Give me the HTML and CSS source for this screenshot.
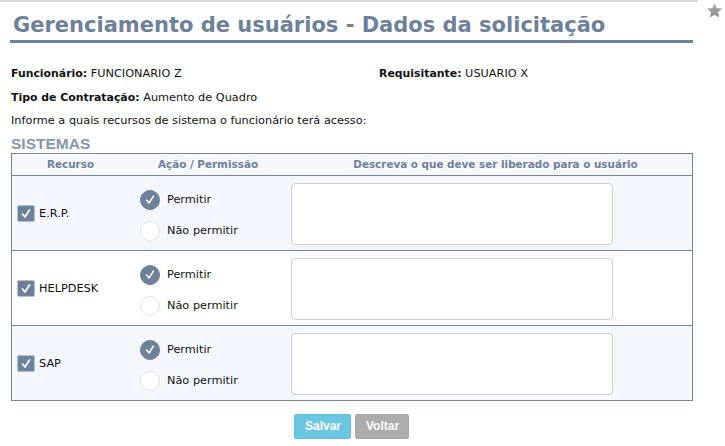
FILE: index.html
```html
<!DOCTYPE html>
<html lang="pt-BR">
<head>
<meta charset="utf-8">
<title>Gerenciamento de usuários</title>
<link rel="stylesheet" href="styles.css">
</head>
<body>
<div class="topline"></div>
<svg class="star" width="17" height="17" viewBox="0 0 24 24" aria-hidden="true"><defs><linearGradient id="sg" x1="0" y1="0" x2="0" y2="1"><stop offset="0" stop-color="#b4b4b4"/><stop offset="1" stop-color="#8c8c8c"/></linearGradient></defs><path d="M12 1.5l3.2 7.1 7.6.7-5.8 5.1 1.7 7.6L12 18l-6.7 4 1.7-7.6-5.8-5.1 7.6-.7z" fill="url(#sg)"/></svg>
<div class="page">
  <h1 class="title">Gerenciamento de usuários - Dados da solicitação</h1>
  <div class="info">
    <div class="info-row two">
      <div><b>Funcionário:</b> FUNCIONARIO Z</div>
      <div><b>Requisitante:</b> USUARIO X</div>
    </div>
    <div class="info-row"><b>Tipo de Contratação:</b> Aumento de Quadro</div>
    <div class="info-row">Informe a quais recursos de sistema o funcionário terá acesso:</div>
  </div>
  <div class="section">SISTEMAS</div>
  <table class="grid">
    <thead>
      <tr>
        <th class="c1">Recurso</th>
        <th class="c2">Ação / Permissão</th>
        <th class="c3">Descreva o que deve ser liberado para o usuário</th>
      </tr>
    </thead>
    <tbody>
      <tr class="alt">
        <td class="c1"><label class="chk"><span class="box"><svg width="12" height="11" viewBox="0 0 12 11"><path d="M2.5 6l2.5 3 4.5-7" fill="none" stroke="#fff" stroke-width="1.7" stroke-linecap="round" stroke-linejoin="round"/></svg></span>E.R.P.</label></td>
        <td class="c2">
          <div class="radio"><span class="dot on"><svg width="12" height="11" viewBox="0 0 12 11"><path d="M2.5 6l2.5 3 4.5-7" fill="none" stroke="#fff" stroke-width="1.4" stroke-linecap="round" stroke-linejoin="round"/></svg></span>Permitir</div>
          <div class="radio"><span class="dot"></span>Não permitir</div>
        </td>
        <td class="c3"><textarea class="desc"></textarea></td>
      </tr>
      <tr>
        <td class="c1"><label class="chk"><span class="box"><svg width="12" height="11" viewBox="0 0 12 11"><path d="M2.5 6l2.5 3 4.5-7" fill="none" stroke="#fff" stroke-width="1.7" stroke-linecap="round" stroke-linejoin="round"/></svg></span>HELPDESK</label></td>
        <td class="c2">
          <div class="radio"><span class="dot on"><svg width="12" height="11" viewBox="0 0 12 11"><path d="M2.5 6l2.5 3 4.5-7" fill="none" stroke="#fff" stroke-width="1.4" stroke-linecap="round" stroke-linejoin="round"/></svg></span>Permitir</div>
          <div class="radio"><span class="dot"></span>Não permitir</div>
        </td>
        <td class="c3"><textarea class="desc"></textarea></td>
      </tr>
      <tr class="alt">
        <td class="c1"><label class="chk"><span class="box"><svg width="12" height="11" viewBox="0 0 12 11"><path d="M2.5 6l2.5 3 4.5-7" fill="none" stroke="#fff" stroke-width="1.7" stroke-linecap="round" stroke-linejoin="round"/></svg></span>SAP</label></td>
        <td class="c2">
          <div class="radio"><span class="dot on"><svg width="12" height="11" viewBox="0 0 12 11"><path d="M2.5 6l2.5 3 4.5-7" fill="none" stroke="#fff" stroke-width="1.4" stroke-linecap="round" stroke-linejoin="round"/></svg></span>Permitir</div>
          <div class="radio"><span class="dot"></span>Não permitir</div>
        </td>
        <td class="c3"><textarea class="desc"></textarea></td>
      </tr>
    </tbody>
  </table>
  <div class="actions">
    <button class="btn save">Salvar</button>
    <button class="btn back">Voltar</button>
  </div>
</div>
</body>
</html>
```
FILE: styles.css
```css
html, body {
  margin: 0;
  padding: 0;
  background: #fff;
}
body {
  font-family: "DejaVu Sans", Verdana, sans-serif;
  font-size: 11.3px;
  color: #111;
  position: relative;
}
.topline {
  height: 2px;
  width: 698px;
  background: #d6d6d6;
}
.star {
  position: absolute;
  top: 2px;
  left: 706px;
}
.page {
  margin-left: 10px;
  width: 683px;
}
.title {
  margin: 8px 0 0 0;
  padding-left: 3px;
  height: 30px;
  line-height: 30px;
  font-size: 21px;
  font-weight: bold;
  color: #6d8198;
  border-bottom: 3px solid #6d8198;
  white-space: nowrap;
}
.info {
  margin: 19px 0 0 1px;
}
.info-row {
  height: 23.5px;
  line-height: 23.5px;
  white-space: nowrap;
}
.info-row b {
  font-size: 10.9px;
}
.info-row.two {
  display: grid;
  grid-template-columns: 368px 1fr;
}
.section {
  margin: 1px 0 0 1px;
  height: 19px;
  line-height: 19px;
  font-family: "Liberation Sans", Arial, sans-serif;
  font-weight: bold;
  font-size: 15.5px;
  color: #8596ab;
}
.grid {
  margin-left: 1px;
  width: 682px;
  border-collapse: collapse;
  border: 1px solid #73869c;
  table-layout: fixed;
}
.grid th {
  height: 21px;
  padding: 0;
  background: #f5f7fb;
  color: #6d8198;
  font-size: 10.4px;
  font-weight: bold;
  text-align: center;
  border-bottom: 1px solid #73869c;
}
.grid th.c1 { width: 117px; }
.grid th.c2 { width: 158px; }
.grid th.c3 { padding-left: 12px; }
.grid td {
  padding: 0;
  vertical-align: middle;
  border-top: 1px solid #73869c;
}
.grid tr.alt td {
  background: #f4f7fd;
}
.grid td.c1 {
  padding-left: 5px;
  padding-top: 1px;
}
.grid td.c2 {
  padding-left: 11px;
  padding-top: 5px;
}
.grid td.c3 {
  padding: 7px 4px 5px 4px;
}
.chk {
  display: flex;
  align-items: center;
  gap: 4px;
}
.box {
  width: 16px;
  height: 15px;
  background: #6d8198;
  border: 1px solid #b3bfcc;
  border-radius: 2px;
  display: flex;
  align-items: center;
  justify-content: center;
}
.radio {
  display: flex;
  align-items: center;
  gap: 7px;
  height: 31px;
}
.dot {
  width: 18px;
  height: 18px;
  border-radius: 50%;
  border: 1px solid #e2e2e2;
  background: #fff;
  display: flex;
  align-items: center;
  justify-content: center;
}
.dot.on {
  background: #6d8198;
  border-color: #6d8198;
}
.desc {
  display: block;
  box-sizing: border-box;
  width: 322px;
  height: 62px;
  margin: 0;
  border: 1px solid #cfcfcf;
  border-radius: 4px;
  background: #fff;
  resize: none;
}
.actions {
  margin-top: 13px;
  display: flex;
  justify-content: center;
  gap: 4px;
}
.btn {
  height: 25px;
  padding: 0 10px;
  border-radius: 2px;
  font-family: "Liberation Sans", Arial, sans-serif;
  font-weight: bold;
  font-size: 12px;
  color: #fff;
  cursor: pointer;
}
.btn.save {
  width: 57px;
  background: #6bc6e1;
  border: 1px solid #62bedb;
}
.btn.back {
  width: 54px;
  background: #acacac;
  border: 1px solid #a6a6a6;
}
```
